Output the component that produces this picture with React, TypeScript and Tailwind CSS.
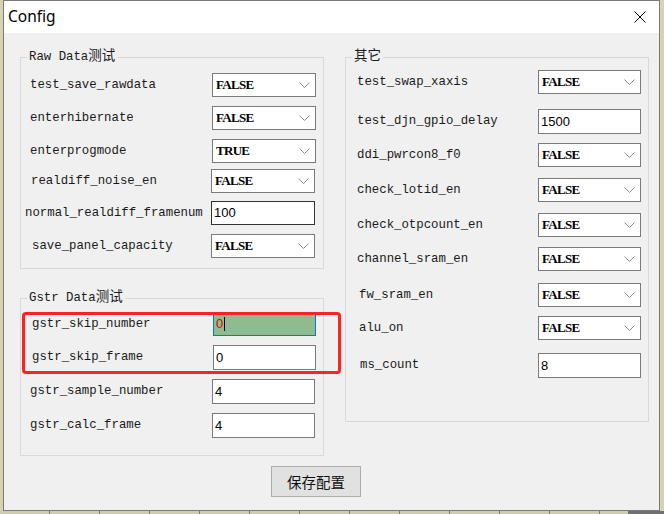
type Row = {
  label: string;
  value: string;
  kind: "select" | "input" | "focus";
  mt: string;
  pl: string;
  lw: string;
  cw: string;
  h?: string;
  dark?: boolean;
};

const RAW_ROWS: Row[] = [
  { label: "test_save_rawdata", value: "FALSE", kind: "select", mt: "mt-[8px]", pl: "pl-[9px]", lw: "w-[191px]", cw: "w-[104px]" },
  { label: "enterhibernate", value: "FALSE", kind: "select", mt: "mt-[9px]", pl: "pl-[9px]", lw: "w-[191px]", cw: "w-[104px]" },
  { label: "enterprogmode", value: "TRUE", kind: "select", mt: "mt-[9px]", pl: "pl-[9px]", lw: "w-[191px]", cw: "w-[104px]" },
  { label: "realdiff_noise_en", value: "FALSE", kind: "select", mt: "mt-[6px]", pl: "pl-[10px]", lw: "w-[190px]", cw: "w-[104px]" },
  { label: "normal_realdiff_framenum", value: "100", kind: "input", mt: "mt-[8px]", pl: "pl-[4px]", lw: "w-[190px]", cw: "w-[104px]", dark: true },
  { label: "save_panel_capacity", value: "FALSE", kind: "select", mt: "mt-[9px]", pl: "pl-[11px]", lw: "w-[190px]", cw: "w-[104px]" },
];

const GSTR_ROWS: Row[] = [
  { label: "gstr_skip_number", value: "0", kind: "focus", mt: "mt-[6px]", pl: "pl-[11px]", lw: "w-[192px]", cw: "w-[103px]" },
  { label: "gstr_skip_frame", value: "0", kind: "input", mt: "mt-[9px]", pl: "pl-[11px]", lw: "w-[192px]", cw: "w-[103px]", h: "h-[25px]" },
  { label: "gstr_sample_number", value: "4", kind: "input", mt: "mt-[9px]", pl: "pl-[9px]", lw: "w-[191px]", cw: "w-[103px]", h: "h-[25px]" },
  { label: "gstr_calc_frame", value: "4", kind: "input", mt: "mt-[9px]", pl: "pl-[9px]", lw: "w-[191px]", cw: "w-[103px]", h: "h-[25px]" },
];

const OTHER_ROWS: Row[] = [
  { label: "test_swap_xaxis", value: "FALSE", kind: "select", mt: "mt-[5px]", pl: "pl-[11px]", lw: "w-[192px]", cw: "w-[103px]" },
  { label: "test_djn_gpio_delay", value: "1500", kind: "input", mt: "mt-[15px]", pl: "pl-[11px]", lw: "w-[192px]", cw: "w-[103px]", h: "h-[25px]" },
  { label: "ddi_pwrcon8_f0", value: "FALSE", kind: "select", mt: "mt-[9px]", pl: "pl-[11px]", lw: "w-[192px]", cw: "w-[103px]" },
  { label: "check_lotid_en", value: "FALSE", kind: "select", mt: "mt-[11px]", pl: "pl-[11px]", lw: "w-[192px]", cw: "w-[103px]" },
  { label: "check_otpcount_en", value: "FALSE", kind: "select", mt: "mt-[11px]", pl: "pl-[11px]", lw: "w-[192px]", cw: "w-[103px]" },
  { label: "channel_sram_en", value: "FALSE", kind: "select", mt: "mt-[10px]", pl: "pl-[11px]", lw: "w-[192px]", cw: "w-[103px]" },
  { label: "fw_sram_en", value: "FALSE", kind: "select", mt: "mt-[12px]", pl: "pl-[13px]", lw: "w-[192px]", cw: "w-[103px]" },
  { label: "alu_on", value: "FALSE", kind: "select", mt: "mt-[9px]", pl: "pl-[13px]", lw: "w-[192px]", cw: "w-[103px]" },
  { label: "ms_count", value: "8", kind: "input", mt: "mt-[13px]", pl: "pl-[14px]", lw: "w-[192px]", cw: "w-[103px]", h: "h-[25px]" },
];

function Control({ row }: { row: Row }) {
  const h = row.h ?? "h-[24px]";
  if (row.kind === "select") {
    return (
      <div className={`${row.cw} ${h} flex items-center justify-between border border-[#7a7a7a] bg-white pl-[3px] pr-[5px]`}>
        <span className="font-['Liberation_Serif',serif] text-[13px] font-bold tracking-[-0.7px] text-black">
          {row.value}
        </span>
        <svg width="11" height="6" viewBox="0 0 11 6">
          <path d="M0.5 0.5 L5.5 5.5 L10.5 0.5" fill="none" stroke="#8c8c8c" strokeWidth="1" />
        </svg>
      </div>
    );
  }
  if (row.kind === "focus") {
    return (
      <div className={`${row.cw} ${h} flex items-center border border-[#0078d7] bg-[#8fbc8f] pl-[2px]`}>
        <span className="font-['Liberation_Sans',sans-serif] text-[13px] text-[#e00000]">{row.value}</span>
        <span className="ml-[1px] h-[14px] w-px bg-black" />
      </div>
    );
  }
  return (
    <div
      className={`${row.cw} ${h} flex items-center bg-white pl-[2px] font-['Liberation_Sans',sans-serif] text-[13px] text-black ${
        row.dark ? "border border-[#333333]" : "border border-[#7a7a7a]"
      }`}
    >
      {row.value}
    </div>
  );
}

function FieldRow({ row }: { row: Row }) {
  return (
    <div className={`flex items-center ${row.mt}`}>
      <div className={`${row.lw} ${row.pl} whitespace-nowrap text-[12.35px] text-[#1a1a1a]`}>{row.label}</div>
      <Control row={row} />
    </div>
  );
}

function Group({
  ascii,
  cjk,
  rows,
  pb,
  mt,
}: {
  ascii: string;
  cjk: string;
  rows: Row[];
  pb: string;
  mt: string;
}) {
  return (
    <fieldset className={`w-[304px] border border-[#d9d9d9] ${mt}`}>
      <legend className="ml-[6px] px-[2px] leading-[16px] text-[12.35px] text-[#1a1a1a]">
        {ascii}
        <span className="text-[13.5px]">{cjk}</span>
      </legend>
      <div className={`flex flex-col ${pb}`}>
        {rows.map((r) => (
          <FieldRow key={r.label} row={r} />
        ))}
      </div>
    </fieldset>
  );
}

export default function App() {
  return (
    <div className="flex h-[514px] w-[664px] flex-col overflow-hidden bg-[#d6d3b5] font-['Liberation_Mono','Noto_Sans_CJK_SC',monospace]">
      <div className="ml-[3px] flex h-[511px] w-[657px] flex-col overflow-hidden border border-[#7a7a7a] bg-[#f0f0f0]">
        {/* title bar */}
        <div className="flex h-[32px] shrink-0 items-center justify-between bg-white pl-[4px] pr-[13px]">
          <span className="font-['Noto_Sans',sans-serif] text-[15.5px] leading-none text-black">Config</span>
          <svg width="12" height="12" viewBox="0 0 12 12">
            <path d="M0.5 0.5 L11.5 11.5 M11.5 0.5 L0.5 11.5" stroke="#000" strokeWidth="1" />
          </svg>
        </div>

        <div className="flex flex-col">
          <div className="relative flex items-start">
            <div className="ml-[16px] flex w-[304px] flex-col">
              <Group ascii="Raw Data" cjk="测试" rows={RAW_ROWS} pb="pb-[10px]" mt="mt-[16px]" />
              <Group ascii="Gstr Data" cjk="测试" rows={GSTR_ROWS} pb="pb-[17px]" mt="mt-[21px]" />
            </div>
            <div className="ml-[21px] w-[304px]">
              <Group ascii="" cjk="其它" rows={OTHER_ROWS} pb="pb-[43px]" mt="mt-[16px]" />
            </div>
            <div className="absolute left-[18px] top-[279px] h-[62px] w-[319px] rounded-[4px] border-[3px] border-[#ff2222]" />
          </div>

          <button className="ml-[267px] mt-[10px] flex h-[31px] w-[90px] items-center justify-center border border-[#adadad] bg-[#e1e1e1] font-['Noto_Sans_CJK_SC',sans-serif] text-[14.5px] text-[#111]">
            保存配置
          </button>
        </div>
      </div>
      <div className="flex h-[3px]">
        <div className="flex-1 bg-[repeating-linear-gradient(90deg,#cfcdb0_0px,#cfcdb0_49px,#7a7a70_49px,#7a7a70_50px)]" />
        <div className="w-[36px] bg-[#707070]" />
      </div>
    </div>
  );
}
